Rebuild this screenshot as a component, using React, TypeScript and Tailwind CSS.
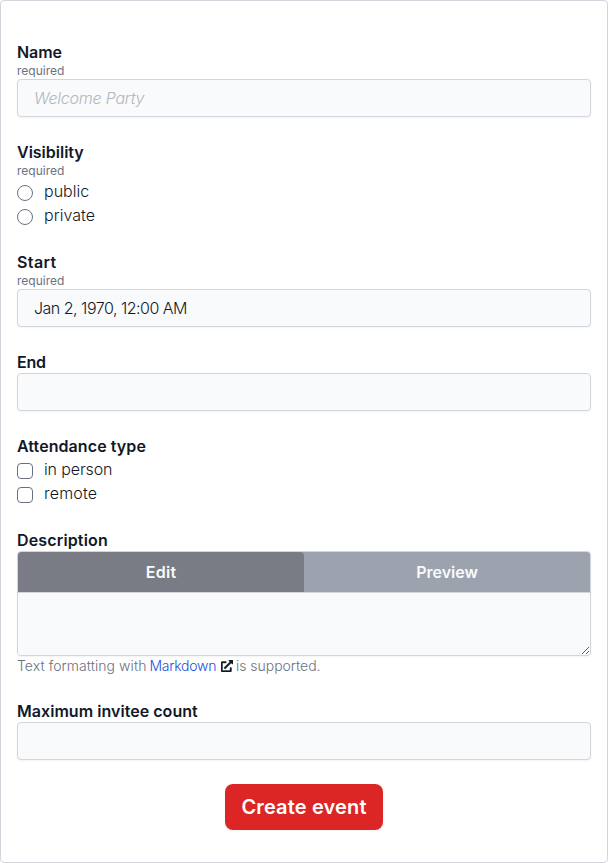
import type { ReactNode } from "react";
import { FaExternalLinkAlt } from "react-icons/fa";

const inputClass =
  "block h-[38px] w-full rounded-[4px] border border-gray-300 bg-[#f9fafb] px-4 text-[16px] leading-6 text-[#111827] shadow-xs outline-none";

type FieldProps = {
  label: string;
  tracking?: string;
  required?: boolean;
  children: ReactNode;
};

function Field({ label, tracking = "", required, children }: FieldProps) {
  return (
    <div>
      <div className={`h-[22px] text-[16px] leading-[22px] font-semibold ${tracking}`}>
        <span>{label}</span>
      </div>
      {required && <div className="h-4 text-xs leading-4 text-gray-500">required</div>}
      {children}
    </div>
  );
}

function Choice({ type, label, tracking = "" }: { type: "radio" | "checkbox"; label: string; tracking?: string }) {
  return (
    <label className="flex h-6 items-start">
      <input
        type={type}
        name={type === "radio" ? "visibility" : label}
        className={`mt-1.5 mr-[11px] size-4 shrink-0 appearance-none border border-gray-500 bg-white ${
          type === "radio" ? "rounded-full" : "rounded-[4px]"
        }`}
      />
      <span className={`text-[16px] leading-6 font-[350] ${tracking}`}>{label}</span>
    </label>
  );
}

export default function App() {
  return (
    <form
      className="flex h-[863px] w-[608px] flex-col gap-6 rounded-[4px] border border-gray-300 bg-white px-4 pt-10 text-[#111827]"
      style={{ fontFamily: 'Inter, "Liberation Sans", sans-serif' }}
    >
      <Field label="Name" required tracking="tracking-[-0.1px]">
        <input
          className={`${inputClass} font-light tracking-[-0.22px] placeholder:text-[#b3b6bc] placeholder:italic placeholder:opacity-100`}
          placeholder="Welcome Party"
        />
      </Field>
      <Field label="Visibility" required>
        <Choice type="radio" label="public" />
        <Choice type="radio" label="private" tracking="tracking-[0.05px]" />
      </Field>
      <Field label="Start" required tracking="tracking-[0.4px]">
        <input className={`${inputClass} font-[350] tracking-[-0.5px]`} defaultValue="Jan 2, 1970, 12:00 AM" />
      </Field>
      <Field label="End" tracking="tracking-[-0.2px]">
        <input className={inputClass} />
      </Field>
      <Field label="Attendance type" tracking="tracking-[0.08px]">
        <Choice type="checkbox" label="in person" tracking="tracking-[-0.13px]" />
        <Choice type="checkbox" label="remote" tracking="tracking-[0.2px]" />
      </Field>
      <Field label="Description" tracking="tracking-[0.15px]">
        <div className="h-[105px] overflow-hidden rounded-[4px] border border-gray-300 bg-[#f9fafb] shadow-xs">
          <div className="flex h-[41px] border-b border-gray-300 bg-[#9ca3af] text-[16px] font-semibold text-[#f9fafb]">
            <button type="button" className="h-10 flex-1 rounded-t-[4px] bg-[#797c84] tracking-[0.3px]">
              Edit
            </button>
            <button type="button" className="h-10 flex-1">
              Preview
            </button>
          </div>
          <textarea className="block h-[62px] w-full resize-y bg-[#f9fafb] px-4 py-2 outline-none" />
        </div>
        <div className="flex h-5 items-center text-sm leading-5 font-[350] whitespace-pre text-gray-500">
          <span className="w-[132.5px] tracking-[0.06px]">Text formatting with </span>
          <a className="w-[67.5px] tracking-[-0.25px] text-[#1d4ed8]">Markdown</a>
          <FaExternalLinkAlt className="mr-[3px] ml-1 size-3 stroke-current [stroke-width:16] text-[#111827]" />
          <span className="tracking-[-0.03px]">is supported.</span>
        </div>
      </Field>
      <Field label="Maximum invitee count" tracking="tracking-[0.04px]">
        <input className={inputClass} />
      </Field>
      <button
        type="button"
        className="h-[46px] w-[158px] shrink-0 self-center rounded-lg bg-[#dc2626] text-xl font-semibold tracking-[0.15px] text-white shadow-xs"
      >
        Create event
      </button>
    </form>
  );
}
